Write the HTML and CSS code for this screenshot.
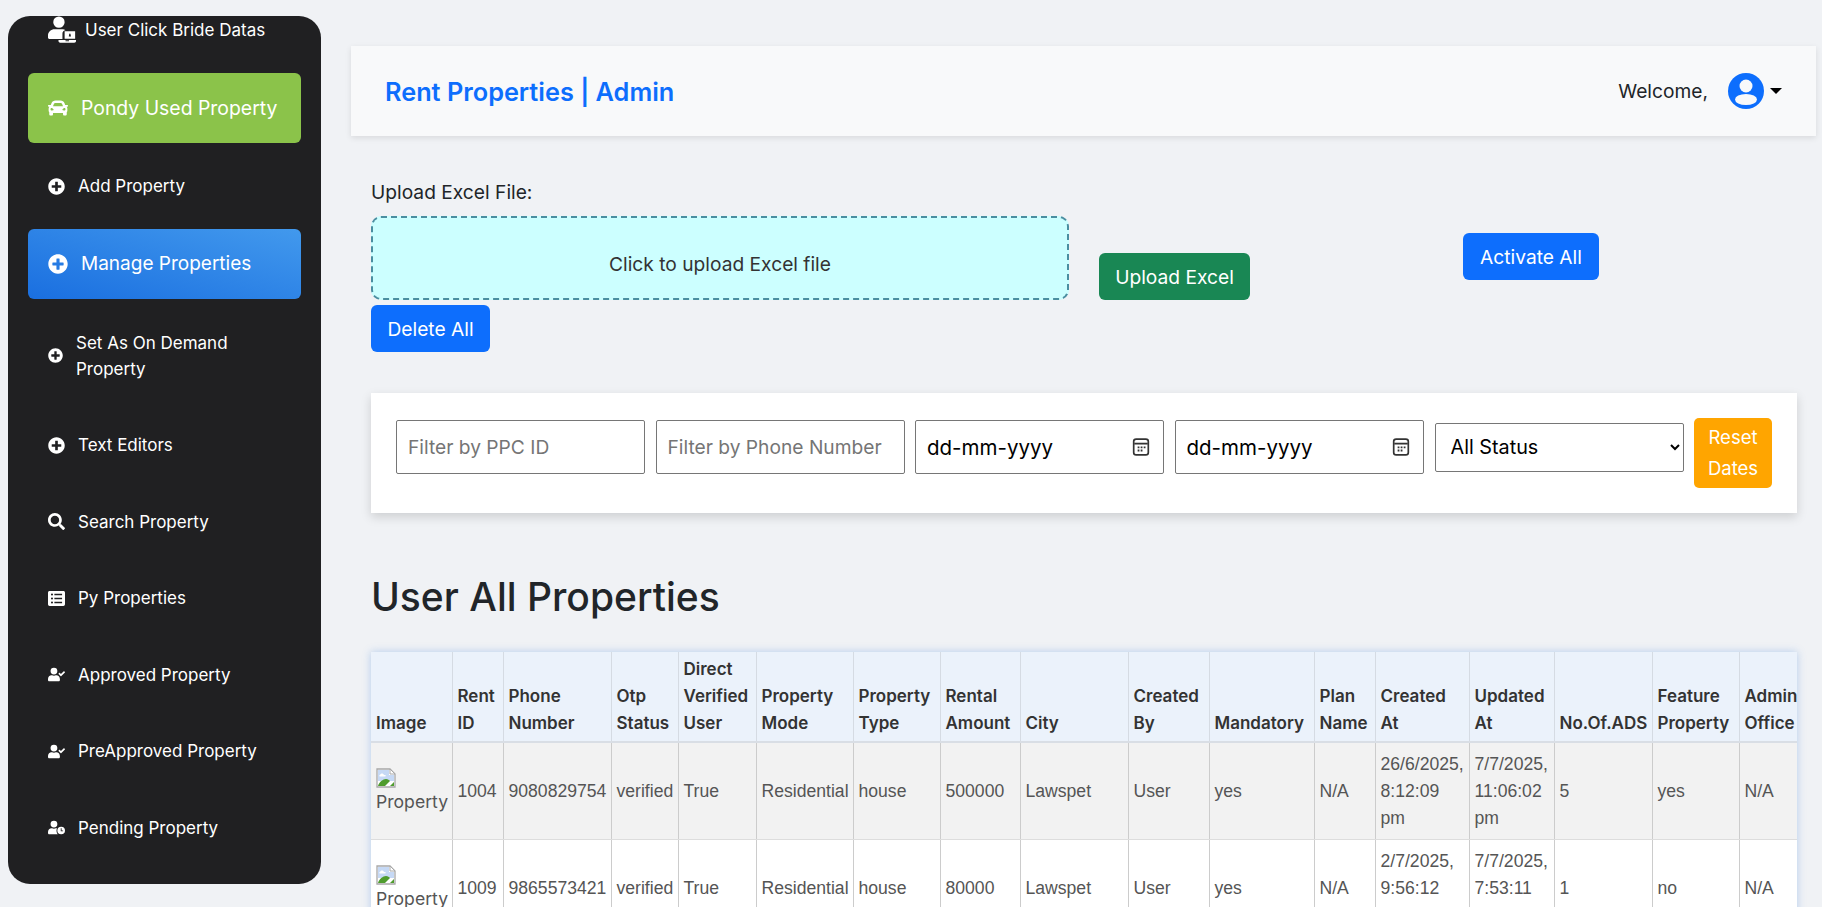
FILE: index.html
```html
<!DOCTYPE html>
<html lang="en">
<head>
<meta charset="utf-8">
<title>Rent Properties | Admin</title>
<link rel="stylesheet" href="styles.css">
</head>
<body>
<svg class="defs" width="0" height="0" aria-hidden="true">
  <symbol id="i-plus" viewBox="0 0 512 512"><path d="M256 8C119 8 8 119 8 256s111 248 248 248 248-111 248-248S393 8 256 8zm144 276c0 6.6-5.4 12-12 12h-92v92c0 6.6-5.4 12-12 12h-56c-6.6 0-12-5.4-12-12v-92h-92c-6.6 0-12-5.4-12-12v-56c0-6.6 5.4-12 12-12h92v-92c0-6.6 5.4-12 12-12h56c6.6 0 12 5.4 12 12v92h92c6.6 0 12 5.4 12 12v56z"/></symbol>
  <symbol id="i-search" viewBox="0 0 512 512"><path d="M505 442.7L405.3 343c-4.5-4.5-10.6-7-17-7H372c27.6-35.3 44-79.7 44-128C416 93.1 322.9 0 208 0S0 93.1 0 208s93.1 208 208 208c48.3 0 92.7-16.4 128-44v16.3c0 6.4 2.5 12.5 7 17l99.7 99.7c9.4 9.4 24.6 9.4 33.9 0l28.3-28.3c9.4-9.4 9.4-24.6.1-34zM208 336c-70.7 0-128-57.2-128-128 0-70.7 57.2-128 128-128 70.7 0 128 57.2 128 128 0 70.7-57.2 128-128 128z"/></symbol>
  <symbol id="i-list" viewBox="0 0 512 512"><path fill-rule="evenodd" d="M48 32h416c26.5 0 48 21.500 48 48v352c0 26.500-21.500 48-48 48H48c-26.500 0-48-21.500-48-48V80c0-26.500 21.500-48 48-48zM88 136a32 32 0 1 0 64 0a32 32 0 1 0-64 0zM88 256a32 32 0 1 0 64 0a32 32 0 1 0-64 0zM88 376a32 32 0 1 0 64 0a32 32 0 1 0-64 0zM192 112v48h232v-48zM192 232v48h232v-48zM192 352v48h232v-48z"/></symbol>
  <symbol id="i-ucheck" viewBox="0 0 640 512"><path d="M224 256a128 128 0 1 0 0-256 128 128 0 0 0 0 256zm90 32h-17c-22 10-47 16-73 16s-51-6-73-16h-17C60 288 0 348 0 422v42c0 26 22 48 48 48h352c26 0 48-22 48-48v-42c0-74-60-134-134-134zM637 160l-28-28c-4-4-12-4-16 0L487 237l-46-46c-4-4-12-4-16 0l-28 28c-4 4-4 12 0 16l82 83c4 4 12 4 16 0l142-142c4-4 4-12 0-16z"/></symbol>
  <symbol id="i-uclock" viewBox="0 0 640 512"><path fill-rule="evenodd" d="M224 256a128 128 0 1 0 0-256 128 128 0 0 0 0 256zM496 224a144 144 0 1 0 0 288 144 144 0 0 0 0-288zm-16 64h32v80h56v32h-88zM314 288h-17c-22 10-47 16-73 16s-51-6-73-16h-17C60 288 0 348 0 422v42c0 26 22 48 48 48h323c-30-28-51-70-51-144 0-26 5-50 18-71-8-6-16-9-24-9z"/></symbol>
  <symbol id="i-ulock" viewBox="0 0 640 640"><path fill-rule="evenodd" d="M250 270a130 130 0 1 0 0-260 130 130 0 0 0 0 260zM340 300H150C70 300 0 360 0 440v50c0 20 16 36 36 36h294V400c0-40 30-70 70-74-20-16-40-26-60-26zM380 350h240v170H380zM475 470h50l-8-50c-3-30-31-30-34 0zM240 550h400v20c0 20-16 40-40 40H280c-24 0-40-20-40-40zM400 555v20h80v-20z"/></symbol>
  <symbol id="i-car" viewBox="0 0 512 512"><path d="M499.990 176h-59.870l-16.640-41.600C406.380 91.630 365.570 64 319.500 64h-127c-46.060 0-86.880 27.630-103.990 70.400L71.870 176H12.010C4.200 176-1.530 183.340.37 190.910l6 24C7.700 220.250 12.500 224 18.010 224h20.070C24.650 235.730 16 252.780 16 272v48c0 16.120 6.160 30.670 16 41.930V416c0 17.670 14.330 32 32 32h32c17.670 0 32-14.330 32-32v-32h256v32c0 17.670 14.330 32 32 32h32c17.670 0 32-14.330 32-32v-54.070c9.840-11.250 16-25.800 16-41.930v-48c0-19.220-8.650-36.270-22.070-48h20.070c5.510 0 10.310-3.750 11.640-9.090l6-24c1.890-7.570-3.840-14.910-11.650-14.910zM147.920 158.170C155.210 139.950 172.860 128 192.500 128h127c19.640 0 37.290 11.950 44.580 30.170L384 208H128l19.920-49.830zM96 319.800c-19.200 0-32-12.760-32-31.900S76.800 256 96 256s48 28.710 48 47.850-28.800 15.950-48 15.950zm320 0c-19.200 0-48 3.190-48-15.950S396.800 256 416 256s32 12.760 32 31.900-12.800 31.900-32 31.900z"/></symbol>
  <symbol id="i-cal" viewBox="0 0 16 16"><rect x="1.500" y="1" width="13" height="14" rx="2.200" fill="none" stroke="currentColor" stroke-width="1.500"/><path d="M2 4.200h12v1.600H2z"/><path d="M5 7.500h1.600v1.600H5zM7.700 7.500h1.600v1.600H7.700zM10.400 7.500h1.600v1.600h-1.600zM5 10.300h1.600v1.600H5zM7.700 10.300h1.600v1.600H7.700z"/></symbol>
  <symbol id="i-broken" viewBox="0 0 20 20"><path d="M1 1h13l5 5v13H1z" fill="#fff" stroke="#a8a8a8" stroke-width="1.300"/><path d="M2 2h11v5h5v6H2z" fill="#c6d9f5"/><path d="M4 7c1-2 3-2 4 0h1c1 0 1 1.500 0 1.500H4C3 8.500 3 7 4 7z" fill="#fff"/><path d="M2 18c1-4 5-7 8-7 2 0 3 1 4 2l-5 5z" fill="#4f9c2e"/><path d="M14 1v5h5z" fill="#fff" stroke="#a8a8a8"/><path d="M14 18l4-4v4z" fill="#4f9c2e"/></symbol>
</svg>

<div class="layout">
  <aside class="sidebar">
    <ul class="menu">
      <li class="item item-top"><svg class="ic ic-top"><use href="#i-ulock"/></svg><span>User Click Bride Datas</span></li>
      <li class="item item-big item-green"><svg class="ic ic-big"><use href="#i-car"/></svg><span>Pondy Used Property</span></li>
      <li class="item"><svg class="ic"><use href="#i-plus"/></svg><span>Add Property</span></li>
      <li class="item item-big item-blue"><svg class="ic ic-big"><use href="#i-plus"/></svg><span>Manage Properties</span></li>
      <li class="item item-wrap"><svg class="ic ic-small"><use href="#i-plus"/></svg><span>Set As On Demand Property</span></li>
      <li class="item"><svg class="ic"><use href="#i-plus"/></svg><span>Text Editors</span></li>
      <li class="item"><svg class="ic"><use href="#i-search"/></svg><span>Search Property</span></li>
      <li class="item"><svg class="ic"><use href="#i-list"/></svg><span>Py Properties</span></li>
      <li class="item"><svg class="ic"><use href="#i-ucheck"/></svg><span>Approved Property</span></li>
      <li class="item"><svg class="ic"><use href="#i-ucheck"/></svg><span>PreApproved Property</span></li>
      <li class="item"><svg class="ic"><use href="#i-uclock"/></svg><span>Pending Property</span></li>
    </ul>
  </aside>

  <main class="main">
    <nav class="topbar">
      <a class="brand">Rent Properties | Admin</a>
      <div class="user">
        <span class="welcome">Welcome,</span>
        <span class="avatar">
          <svg viewBox="0 0 36 36" width="36" height="36"><circle cx="18" cy="18" r="18" fill="#0d6efd"/><circle cx="18" cy="13" r="6.500" fill="#f8f9fa"/><ellipse cx="18" cy="26.500" rx="11" ry="5.500" fill="#f8f9fa"/></svg>
        </span>
        <span class="caret"></span>
      </div>
    </nav>

    <section class="content">
      <div class="upload-label">Upload Excel File:</div>
      <div class="upload-row">
        <div class="dropzone">Click to upload Excel file</div>
        <button class="btn btn-green btn-upload">Upload Excel</button>
        <button class="btn btn-blue btn-activate">Activate All</button>
      </div>
      <button class="btn btn-blue btn-delete">Delete All</button>

      <div class="filters">
        <input class="field" type="text" placeholder="Filter by PPC ID">
        <input class="field" type="text" placeholder="Filter by Phone Number">
        <div class="field field-date"><span>dd-mm-yyyy</span><svg class="cal"><use href="#i-cal"/></svg></div>
        <div class="field field-date"><span>dd-mm-yyyy</span><svg class="cal"><use href="#i-cal"/></svg></div>
        <select class="status"><option>All Status</option></select>
        <button class="btn-reset">Reset Dates</button>
      </div>

      <h1 class="title">User All Properties</h1>

      <div class="table-wrap">
        <table class="table">
          <colgroup>
            <col class="c1"><col class="c2"><col class="c3"><col class="c4"><col class="c5"><col class="c6"><col class="c7"><col class="c8"><col class="c9"><col class="c10"><col class="c11"><col class="c12"><col class="c13"><col class="c14"><col class="c15"><col class="c16"><col class="c17">
          </colgroup>
          <thead>
            <tr>
              <th>Image</th><th>Rent ID</th><th>Phone Number</th><th>Otp Status</th><th>Direct Verified User</th><th>Property Mode</th><th>Property Type</th><th>Rental Amount</th><th>City</th><th>Created By</th><th>Mandatory</th><th>Plan Name</th><th>Created At</th><th>Updated At</th><th>No.Of.ADS</th><th>Feature Property</th><th>Admin Office</th>
            </tr>
          </thead>
          <tbody>
            <tr class="odd">
              <td><svg class="broken"><use href="#i-broken"/></svg><span class="alt">Property</span></td>
              <td>1004</td><td>9080829754</td><td>verified</td><td>True</td><td>Residential</td><td>house</td><td>500000</td><td>Lawspet</td><td>User</td><td>yes</td><td>N/A</td><td>26/6/2025, 8:12:09 pm</td><td>7/7/2025, 11:06:02 pm</td><td>5</td><td>yes</td><td>N/A</td>
            </tr>
            <tr>
              <td><svg class="broken"><use href="#i-broken"/></svg><span class="alt">Property</span></td>
              <td>1009</td><td>9865573421</td><td>verified</td><td>True</td><td>Residential</td><td>house</td><td>80000</td><td>Lawspet</td><td>User</td><td>yes</td><td>N/A</td><td>2/7/2025, 9:56:12 am</td><td>7/7/2025, 7:53:11 pm</td><td>1</td><td>no</td><td>N/A</td>
            </tr>
          </tbody>
        </table>
      </div>
    </section>
  </main>
</div>
</body>
</html>
```

FILE: styles.css
```css
* { box-sizing: border-box; }
html, body { margin: 0; height: 907px; overflow: hidden; }
body { background: #f0f2f5; font-family: Inter, "Liberation Sans", sans-serif; font-size: 16px; color: #212529; }
.defs { position: absolute; }
.layout { display: flex; align-items: flex-start; height: 907px; }

.sidebar { flex: 0 0 313px; height: 868px; margin: 16px 0 0 8px; background: #202022; border-radius: 22px; overflow: hidden; color: #fff; }
.menu { list-style: none; margin: -25px 0 0; padding: 0 20px; }
.item { display: flex; align-items: center; gap: 13px; height: 76.500px; padding-left: 20px; font-size: 17px; line-height: 26px; }
.item svg { fill: #fff; }
.ic { flex: none; width: 17px; height: 17px; }
.ic-big { width: 20px; height: 20px; }
.ic-small { width: 15px; height: 15px; }
.ic-top { width: 28px; height: 28px; margin-right: -4px; }
.item-top { height: 77px; }
.item-big { height: 70px; margin: 5px 0; border-radius: 6px; }
.item-blue { margin-top: 4.500px; font-size: 19px; background: linear-gradient(195deg, #4299ed, #1a6fe0); }
.item-green { font-size: 19.400px; background: #8bc34a; }
.item-wrap { height: 103px; }
.item-wrap span { max-width: 180px; }

.main { flex: 1; min-width: 0; padding: 46px 6px 0 30px; }
.topbar { display: flex; align-items: center; justify-content: space-between; height: 90px; padding: 0 34px; background: #f8f9fa; box-shadow: 0 2px 6px rgba(0,0,0,.1); }
.brand { color: #0d6efd; font-size: 25.300px; font-weight: 600; }
.user { display: flex; align-items: center; }
.welcome { font-size: 19.200px; margin-right: 20px; }
.avatar { display: block; width: 36px; height: 36px; }
.caret { width: 0; height: 0; margin: -1px 0 0 6px; border: 6px solid transparent; border-top-color: #000; border-bottom: 0; }

.content { padding: 0 19px 0 20px; }
.upload-label { margin-top: 43px; font-size: 19.200px; line-height: 26px; }
.upload-row { display: flex; align-items: flex-start; margin-top: 11px; }
.dropzone { flex: none; width: 698px; height: 84px; padding-top: 12px; display: flex; align-items: center; justify-content: center; background: #ccffff; border: 2px dashed #4a8ea0; border-radius: 10px; font-size: 19.200px; color: #333; }
.btn { border: 1px solid transparent; border-radius: 6px; color: #fff; font: inherit; font-size: 19.200px; height: 47px; padding: 0; cursor: pointer; }
.btn-blue { background: #0d6efd; }
.btn-green { background: #198754; }
.btn-upload { width: 151px; margin: 37px 0 0 30px; }
.btn-activate { width: 136px; margin: 17px 0 0 213px; }
.btn-delete { display: block; width: 119px; margin-top: 5px; }

.filters { display: flex; align-items: center; gap: 10.500px; height: 120px; margin-top: 41px; padding: 25px; background: #fff; box-shadow: 0 4px 10px rgba(0,0,0,.15); }
.field { flex: none; width: 249px; height: 54px; margin-bottom: 12px; padding: 0 11px; border: 1px solid #767676; border-radius: 2px; font-family: inherit; font-size: 19.200px; color: #000; background: #fff; }
.field::placeholder { color: #757575; }
.field-date { display: flex; align-items: center; justify-content: space-between; padding-right: 13px; font-size: 20.500px; }
.cal { width: 18px; height: 18px; fill: #333; color: #333; }
.status { flex: none; width: 249px; height: 49px; margin: 0 0 12px .5px; padding: 0 11px; border: 1px solid #767676; border-radius: 2px; background: #fff; font-family: inherit; font-size: 19.800px; color: #000; }
.btn-reset { flex: none; width: 78px; height: 70px; padding: 0 8px; border: 0; border-radius: 5px; background: #ffa500; color: #fff; font: inherit; font-size: 18.500px; line-height: 31px; }

.title { margin: 60px 0 0; font-size: 39px; font-weight: 500; line-height: 48px; }

.table-wrap { margin-top: 31px; height: 300px; overflow: hidden; box-shadow: 0 0 8px rgba(66,133,220,.35); background: #fff; }
.table { table-layout: fixed; width: 1476px; border-collapse: collapse; font-size: 17.600px; line-height: 27px; }
.table th { padding: 4px 5px; background: #ebf2fb; border-right: 1px solid #d5dbe3; border-bottom: 2px solid #d9dee5; text-align: left; vertical-align: bottom; font-size: 17px; font-weight: 600; color: #333; }
.table td { padding: 7.500px 5px; border-right: 1px solid #ccc; border-bottom: 1px solid #ddd; font-family: "Liberation Sans", Arial, sans-serif; color: #555; vertical-align: middle; }
.table .odd td { background: #f2f2f2; }
.broken { display: block; width: 20px; height: 20px; }
.alt { display: block; font-family: Inter, sans-serif; font-size: 17.600px; line-height: 27px; }
.c1 { width: 81px; } .c2 { width: 51px; } .c3 { width: 108px; } .c4 { width: 67px; } .c5 { width: 78px; }
.c6 { width: 97px; } .c7 { width: 87px; } .c8 { width: 80px; } .c9 { width: 108px; } .c10 { width: 81px; }
.c11 { width: 105px; } .c12 { width: 61px; } .c13 { width: 94px; } .c14 { width: 85px; } .c15 { width: 98px; }
.c16 { width: 87px; } .c17 { width: 108px; }
```
